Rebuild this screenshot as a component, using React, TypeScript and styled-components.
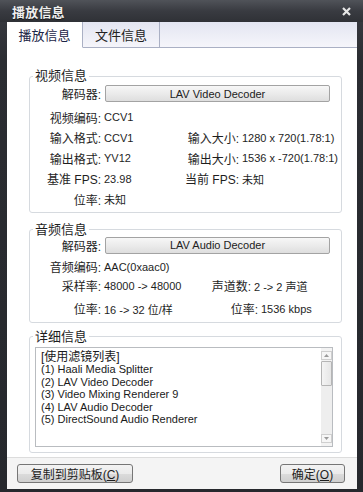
import styled, { createGlobalStyle } from 'styled-components';

const GlobalStyle = createGlobalStyle`
  html, body {
    margin: 0;
    padding: 0;
    background: #2a2c31;
  }

  body {
    font-family: "Liberation Sans", "Noto Sans CJK SC", sans-serif;
    color: #1e1e1e;
  }
`;

const Window = styled.div`
  width: 363px;
  height: 492px;
  box-sizing: border-box;
  display: flex;
  flex-direction: column;
  padding: 0 6px 4px 7px;
  background: linear-gradient(#3b3d44, #2b2d32 60px, #26282d);
`;

const TitleBar = styled.div`
  height: 22px;
  flex: 0 0 22px;
  display: flex;
  align-items: center;
  justify-content: space-between;
  margin: 0 -6px 0 -7px;
  padding: 0 12px;
  background: linear-gradient(#505359, #393b41 50%, #2f3136);

  .title {
    color: #eeeeee;
    font-size: 13px;
    font-weight: bold;
    letter-spacing: 0.2px;
    text-shadow: 0 1px 1px rgba(0, 0, 0, 0.6);
  }
`;

const Client = styled.div`
  flex: 1;
  display: flex;
  flex-direction: column;
  background: #fff;
`;

const TabStrip = styled.div`
  height: 26px;
  flex: 0 0 26px;
  display: flex;
  background: linear-gradient(#e3e5f1, #f6f6fb);
`;

const Tab = styled.div<{ $active?: boolean; $w: number }>`
  width: ${(p) => p.$w}px;
  box-sizing: border-box;
  display: flex;
  align-items: center;
  justify-content: center;
  font-size: 13px;
  color: ${(p) => (p.$active ? '#1c2647' : '#222')};
  background: ${(p) => (p.$active ? '#fff' : 'transparent')};
  border-right: 1px solid #aab0c4;
  border-bottom: 1px solid ${(p) => (p.$active ? 'transparent' : '#aab0c4')};
`;

const TabFiller = styled.div`
  flex: 1;
  border-bottom: 1px solid #aab0c4;
`;

const TabPage = styled.div`
  flex: 1;
  display: flex;
  flex-direction: column;
  padding: 21px 15px 4px 22px;
`;

const Group = styled.fieldset<{ $mt?: number }>`
  margin: ${(p) => p.$mt ?? 0}px 0 0 0;
  padding: 0;
  border: 1px solid #d6dadf;
  border-radius: 3px;
  min-width: 0;

  legend {
    margin-left: 3px;
    padding: 0 2px;
    font-size: 13px;
    line-height: 14px;
    color: #1e1e1e;
  }
`;

const GroupBody = styled.div<{ $pad: string }>`
  padding: ${(p) => p.$pad};
`;

const Row = styled.div<{ $cols: string; $h?: number; $mt?: number }>`
  display: grid;
  grid-template-columns: ${(p) => p.$cols};
  align-items: center;
  height: ${(p) => p.$h ?? 20.5}px;
  margin-top: ${(p) => p.$mt ?? 0}px;
`;

const Label = styled.span`
  text-align: right;
  font-size: 12px;
  white-space: nowrap;
`;

const Value = styled.span`
  padding-left: 3px;
  font-size: 11px;
  white-space: nowrap;
`;

const DecoderRow = styled.div<{ $mb: number }>`
  display: flex;
  align-items: center;
  margin-bottom: ${(p) => p.$mb}px;

  ${Label} {
    width: 71px;
  }
`;

const DecoderBox = styled.div`
  margin-left: 4px;
  width: 225px;
  height: 17px;
  box-sizing: border-box;
  display: flex;
  align-items: center;
  justify-content: center;
  font-size: 11px;
  color: #222;
  border: 1px solid #a3a3a3;
  border-radius: 2px;
  background: linear-gradient(#f7f7f7, #ebebeb 50%, #dedede);
`;

const TextArea = styled.div`
  height: 100px;
  box-sizing: border-box;
  display: flex;
  border: 1px solid #b9bcc0;
  background: #fff;
`;

const Lines = styled.div`
  flex: 1;
  padding: 3px 0 0 5px;
  font-size: 11px;
  line-height: 12.6px;
  color: #1a1a1a;

  .head {
    font-size: 12px;
  }
`;

const ScrollBar = styled.div`
  width: 11px;
  display: flex;
  flex-direction: column;
  padding: 3px 0 3px 0;
  background: #f3f3f3;
`;

const ScrollBtn = styled.div`
  height: 9px;
  box-sizing: border-box;
  border: 1px solid #cfcfcf;
  background: #f6f6f6;
  display: flex;
  align-items: center;
  justify-content: center;
`;

const Thumb = styled.div`
  height: 25px;
  margin-top: 1px;
  box-sizing: border-box;
  border: 1px solid #b5b5b5;
  border-radius: 1px;
  background: linear-gradient(90deg, #f4f4f4, #e6e6e6);
`;

const Track = styled.div`
  flex: 1;
  background: #eeeeee;
`;

const BottomBar = styled.div`
  height: 32px;
  flex: 0 0 32px;
  box-sizing: border-box;
  display: flex;
  align-items: flex-start;
  justify-content: space-between;
  padding: 6px 12px 0 10px;
  border-top: 1px solid #dcdcdc;
  background: #f4f4f4;
`;

const Button = styled.button<{ $w: number }>`
  width: ${(p) => p.$w}px;
  height: 19px;
  padding: 0;
  font-family: inherit;
  font-size: 12px;
  color: #1e1e1e;
  border: 1px solid #767676;
  border-radius: 3px;
  background: linear-gradient(#f3f3f3, #ebebeb 50%, #dcdcdc 51%, #cfcfcf);

  u {
    text-underline-offset: 1px;
  }
`;

const Arrow = ({ down }: { down?: boolean }) => (
  <svg width="5" height="3" viewBox="0 0 5 3">
    <path d={down ? 'M0 0h5L2.5 3z' : 'M0 3h5L2.5 0z'} fill="#9a9a9a" />
  </svg>
);

const filters = [
  '(1) Haali Media Splitter',
  '(2) LAV Video Decoder',
  '(3) Video Mixing Renderer 9',
  '(4) LAV Audio Decoder',
  '(5) DirectSound Audio Renderer',
];

const VIDEO_COLS = '71px 82px 56px 1fr';

const App = () => (
  <>
    <GlobalStyle />
    <Window>
      <TitleBar>
        <span className="title">播放信息</span>
        <svg width="9" height="9" viewBox="0 0 9 9">
          <path d="M1 1l7 7M8 1L1 8" stroke="#e6e6e6" strokeWidth="2.2" />
        </svg>
      </TitleBar>

      <Client>
        <TabStrip>
          <Tab $active $w={76}>播放信息</Tab>
          <Tab $w={77}>文件信息</Tab>
          <TabFiller />
        </TabStrip>

        <TabPage>
          <Group>
            <legend>视频信息</legend>
            <GroupBody $pad="2px 0 2px 0">
              <DecoderRow $mb={5}>
                <Label>解码器:</Label>
                <DecoderBox>LAV Video Decoder</DecoderBox>
              </DecoderRow>
              <Row $cols="71px 1fr">
                <Label>视频编码:</Label>
                <Value>CCV1</Value>
              </Row>
              <Row $cols={VIDEO_COLS}>
                <Label>输入格式:</Label>
                <Value>CCV1</Value>
                <Label>输入大小:</Label>
                <Value>1280 x 720(1.78:1)</Value>
              </Row>
              <Row $cols={VIDEO_COLS}>
                <Label>输出格式:</Label>
                <Value>YV12</Value>
                <Label>输出大小:</Label>
                <Value>1536 x -720(1.78:1)</Value>
              </Row>
              <Row $cols={VIDEO_COLS}>
                <Label>基准 FPS:</Label>
                <Value>23.98</Value>
                <Label>当前 FPS:</Label>
                <Value>未知</Value>
              </Row>
              <Row $cols="71px 1fr">
                <Label>位率:</Label>
                <Value>未知</Value>
              </Row>
            </GroupBody>
          </Group>

          <Group $mt={10}>
            <legend>音频信息</legend>
            <GroupBody $pad="0 0 3px 0">
              <DecoderRow $mb={0}>
                <Label>解码器:</Label>
                <DecoderBox>LAV Audio Decoder</DecoderBox>
              </DecoderRow>
              <Row $cols="71px 1fr" $h={20} $mt={3}>
                <Label>音频编码:</Label>
                <Value>AAC(0xaac0)</Value>
              </Row>
              <Row $cols="71px 100px 50px 1fr" $h={18}>
                <Label>采样率:</Label>
                <Value>48000 -&gt; 48000</Value>
                <Label>声道数:</Label>
                <Value>2 -&gt; 2 声道</Value>
              </Row>
              <Row $cols="71px 100px 57px 1fr" $h={20} $mt={4}>
                <Label>位率:</Label>
                <Value>16 -&gt; 32 位/样</Value>
                <Label>位率:</Label>
                <Value>1536 kbps</Value>
              </Row>
            </GroupBody>
          </Group>

          <Group $mt={7}>
            <legend>详细信息</legend>
            <GroupBody $pad="3px 8px 5px 5px">
              <TextArea>
                <Lines>
                  <div className="head">[使用滤镜列表]</div>
                  {filters.map((f) => (
                    <div key={f}>{f}</div>
                  ))}
                </Lines>
                <ScrollBar>
                  <ScrollBtn>
                    <Arrow />
                  </ScrollBtn>
                  <Thumb />
                  <Track />
                  <ScrollBtn>
                    <Arrow down />
                  </ScrollBtn>
                </ScrollBar>
              </TextArea>
            </GroupBody>
          </Group>
        </TabPage>

        <BottomBar>
          <Button $w={116}>
            复制到剪贴板(<u>C</u>)
          </Button>
          <Button $w={65}>
            确定(<u>O</u>)
          </Button>
        </BottomBar>
      </Client>
    </Window>
  </>
);

export default App;
